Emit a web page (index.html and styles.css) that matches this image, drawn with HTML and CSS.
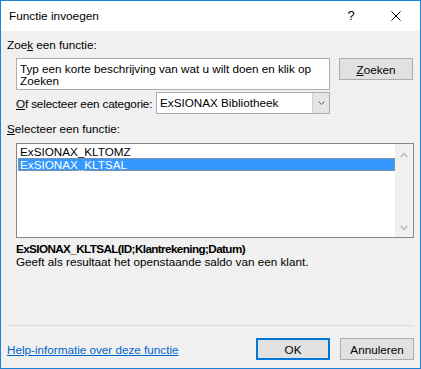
FILE: index.html
```html
<!DOCTYPE html>
<html>
    <head>
        <title>Functie invoegen</title>
        <link rel="stylesheet" href="styles.css">
    </head>
    <body>
        <div class="dialog">
            <div class="titlebar">
                <span class="title">Functie invoegen</span>
                <span class="tb-btn help">?</span>
                <span class="tb-btn close">
                    <svg width="10" height="10" viewBox="0 0 10 10"><path d="M0.5 0.5L9.5 9.5M9.5 0.5L0.5 9.5" stroke="#000" stroke-width="1" fill="none"/></svg>
                </span>
            </div>
            <div class="content">
                <div class="label top-label">Zoe<u>k</u> een functie:</div>
                <div class="search-row">
                    <div class="search-box">Typ een korte beschrijving van wat u wilt doen en klik op<br>Zoeken</div>
                    <button class="btn" type="button"><u>Z</u>oeken</button>
                </div>
                <div class="cat-row">
                    <span class="label cat-label"><u>O</u>f selecteer een categorie:</span>
                    <div class="combo">
                        <span class="combo-text">ExSIONAX Bibliotheek</span>
                        <span class="combo-arrow">
                            <svg width="7" height="4" viewBox="0 0 7 4"><path d="M0.5 0.5L3.5 3.5L6.5 0.5" stroke="#606060" stroke-width="1" fill="none"/></svg>
                        </span>
                    </div>
                </div>
                <div class="label list-label"><u>S</u>electeer een functie:</div>
                <div class="listbox">
                    <div class="items">
                        <div class="item">ExSIONAX_KLTOMZ</div>
                        <div class="item selected">ExSIONAX_KLTSAL</div>
                    </div>
                    <div class="scrollbar">
                        <svg width="8" height="6" viewBox="0 0 8 6"><path d="M0.8 5L4 1.6L7.2 5" stroke="#c2c2c2" stroke-width="1.8" fill="none"/></svg>
                        <svg width="8" height="6" viewBox="0 0 8 6"><path d="M0.8 1L4 4.4L7.2 1" stroke="#c2c2c2" stroke-width="1.8" fill="none"/></svg>
                    </div>
                </div>
                <div class="signature">ExSIONAX_KLTSAL(ID;Klantrekening;Datum)</div>
                <div class="description">Geeft als resultaat het openstaande saldo van een klant.</div>
                <div class="footer">
                    <a class="help-link" href="#">Help-informatie over deze functie</a>
                    <button class="btn default" type="button">OK</button>
                    <button class="btn" type="button">Annuleren</button>
                </div>
            </div>
        </div>
    </body>
</html>
```

FILE: styles.css
```css
body { margin: 0; padding: 0; font-family: "Liberation Sans", Arial, sans-serif; font-size: 11.7px; color: #000; }
.dialog { width: 419px; height: 367px; border: 1px solid #1883d7; background: #f0f0f0; display: flex; flex-direction: column; }

.titlebar { height: 30px; background: #fff; display: flex; align-items: center; padding-left: 8px; padding-bottom: 1px; box-sizing: border-box; }
.title { flex: 1; font-size: 11.8px; }
.tb-btn { width: 46px; text-align: center; display: flex; justify-content: center; align-items: center; }
.help { font-size: 13px; margin-right: -1px; }
.close { margin-right: 1px; }

.content { flex: 1; display: flex; flex-direction: column; padding: 6px 7px 0 6px; }
.label { line-height: 15px; white-space: nowrap; }

.search-row { display: flex; align-items: flex-start; margin-top: 6px; padding-left: 9px; gap: 9px; }
.search-box { width: 314px; height: 32px; box-sizing: border-box; border: 1px solid #abadb3; background: #fff; padding: 4px 0 0 3px; line-height: 12px; white-space: nowrap; }

.btn { width: 74px; height: 22px; box-sizing: border-box; border: 1px solid #adadad; background: #e1e1e1; font: inherit; color: #000; padding: 0; margin: 0; }
.btn.default { border: 2px solid #0078d7; }

.cat-row { display: flex; align-items: center; margin-top: 2px; padding-left: 9px; }
.cat-label { width: 140px; letter-spacing: -0.15px; }
.combo { width: 174px; height: 22px; box-sizing: border-box; border: 1px solid #abadb3; background: #fff; display: flex; }
.combo-text { flex: 1; padding-left: 3px; line-height: 20px; }
.combo-arrow { width: 16px; background: #e5e5e5; border-left: 1px solid #d0d0d0; display: flex; justify-content: center; align-items: center; }

.list-label { margin-top: 7px; }
.listbox { margin: 7px 0 0 9px; width: 398px; height: 95px; box-sizing: border-box; border: 1px solid #828790; background: #fff; display: flex; }
.items { flex: 1; padding: 1px 0 0 1px; }
.item { height: 13px; line-height: 13px; padding-left: 2px; }
.item.selected { background: #3399ff; color: #fff; outline: 1px dotted #c98545; outline-offset: -1px; }
.scrollbar { width: 18px; background: #f0f0f0; display: flex; flex-direction: column; justify-content: space-between; align-items: center; padding: 8px 0 6px; }

.signature { margin: 4px 0 0 9px; font-weight: bold; line-height: 13px; letter-spacing: -0.6px; }
.description { margin-left: 9px; line-height: 13px; }

.footer { margin-top: auto; border-top: 1px solid #dadada; width: 407px; display: flex; align-items: center; gap: 10px; padding: 12px 0 8px; }
.help-link { flex: 1; color: #0066cc; text-decoration: underline; }
```
